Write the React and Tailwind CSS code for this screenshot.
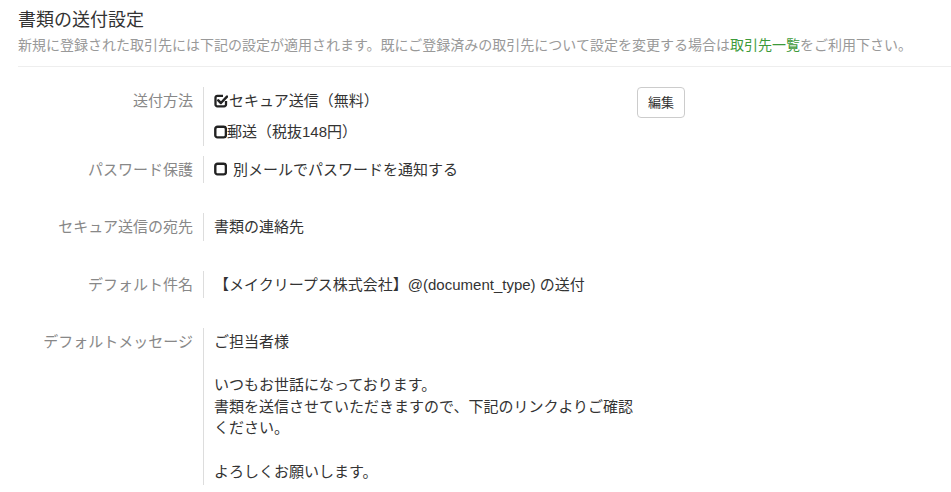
import React from 'react';

const font = { fontFamily: '"Liberation Sans", "Noto Sans CJK JP", sans-serif' };

const CheckedBox = () => (
  <svg width="14" height="14" viewBox="0 0 14 14" className="shrink-0" aria-hidden="true">
    <path
      d="M12 7 V10.5 A1.8 1.8 0 0 1 10.2 12.3 H3.3 A1.8 1.8 0 0 1 1.5 10.5 V3.6 A1.8 1.8 0 0 1 3.3 1.8 H9"
      fill="none"
      stroke="#222"
      strokeWidth="2.3"
    />
    <path d="M4.3 6.4 L6.9 9 L13 2.6" fill="none" stroke="#222" strokeWidth="2.5" strokeLinecap="round" strokeLinejoin="round" />
  </svg>
);

const EmptyBox = () => (
  <svg width="13" height="14" viewBox="0 0 13 14" className="shrink-0" aria-hidden="true">
    <rect x="1.3" y="1.8" width="10.6" height="10.6" rx="2.2" fill="none" stroke="#222" strokeWidth="2.4" />
  </svg>
);

const Row = ({ label, children, className = '' }) => (
  <div className={`flex ${className}`}>
    <div className="w-[203px] shrink-0 pr-[10px] text-right text-[#888] py-[3px]">{label}</div>
    <div className="border-l border-[#ddd] pl-[10px] py-[3px] text-[#333]">{children}</div>
  </div>
);

export default function App() {
  return (
    <div className="bg-white min-h-screen text-[15px] leading-[21.5px]" style={font}>
      <div className="pl-[18px] pt-[7px]">
        <h2 className="text-[18px] leading-[26px] text-[#333]">書類の送付設定</h2>
        <p className="mt-[2px] text-[14px] leading-[20px] text-[#999]">
          新規に登録された取引先には下記の設定が適用されます。既にご登録済みの取引先について設定を変更する場合は
          <a className="text-[#3d9a3a]">取引先一覧</a>をご利用下さい。
        </p>
        <div className="mt-[11px] border-b border-[#eee]" />
      </div>

      <div className="mt-[20px]">
        <div className="flex">
          <div className="w-[203px] shrink-0 pr-[10px] text-right text-[#888] py-[3px]">送付方法</div>
          <div className="border-l border-[#ddd] pl-[10px] py-[3px] text-[#333] w-[434px]">
            <div className="flex items-center">
              <CheckedBox />
              <span className="ml-px">セキュア送信（無料）</span>
            </div>
            <div className="flex items-center mt-[9.5px]">
              <EmptyBox />
              <span>郵送（税抜148円）</span>
            </div>
          </div>
          <button className="h-[31px] w-[48px] rounded-[4px] border border-[#ccc] bg-white text-[13px] text-[#333]">
            編集
          </button>
        </div>

        <Row label="パスワード保護" className="mt-[10px]">
          <div className="flex items-center">
            <EmptyBox />
            <span className="ml-[6px]">別メールでパスワードを通知する</span>
          </div>
        </Row>

        <Row label="セキュア送信の宛先" className="mt-[30px]">
          書類の連絡先
        </Row>

        <Row label="デフォルト件名" className="mt-[30px]">
          【メイクリープス株式会社】@(document_type) の送付
        </Row>

        <Row label="デフォルトメッセージ" className="mt-[30px]">
          <div className="leading-[21.6px]">
            ご担当者様
            <br />
            <br />
            いつもお世話になっております。
            <br />
            書類を送信させていただきますので、下記のリンクよりご確認
            <br />
            ください。
            <br />
            <br />
            よろしくお願いします。
          </div>
        </Row>
      </div>
    </div>
  );
}
